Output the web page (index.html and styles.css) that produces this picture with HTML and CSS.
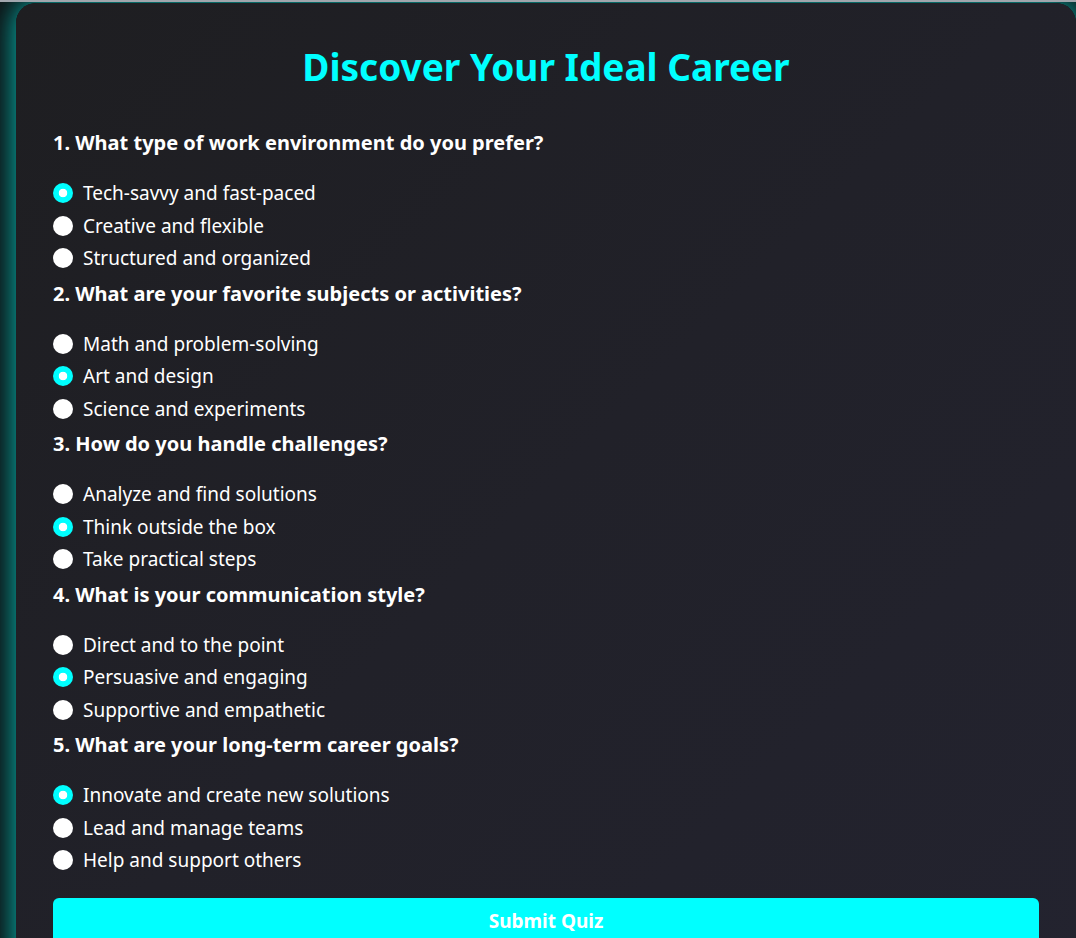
FILE: index.html
```html
<!DOCTYPE html>
<html lang="en">
<head>
<meta charset="utf-8">
<title>Discover Your Ideal Career</title>
<link rel="stylesheet" href="styles.css">
</head>
<body>
<div class="topline"></div>
<main class="card">
  <h1 class="title">Discover Your Ideal Career</h1>
  <form class="quiz">
    <section class="question">
      <h3 class="q-text">1. What type of work environment do you prefer?</h3>
      <label class="option"><input type="radio" name="q1" checked><span>Tech-savvy and fast-paced</span></label>
      <label class="option"><input type="radio" name="q1"><span>Creative and flexible</span></label>
      <label class="option"><input type="radio" name="q1"><span>Structured and organized</span></label>
    </section>
    <section class="question">
      <h3 class="q-text">2. What are your favorite subjects or activities?</h3>
      <label class="option"><input type="radio" name="q2"><span>Math and problem-solving</span></label>
      <label class="option"><input type="radio" name="q2" checked><span>Art and design</span></label>
      <label class="option"><input type="radio" name="q2"><span>Science and experiments</span></label>
    </section>
    <section class="question">
      <h3 class="q-text">3. How do you handle challenges?</h3>
      <label class="option"><input type="radio" name="q3"><span>Analyze and find solutions</span></label>
      <label class="option"><input type="radio" name="q3" checked><span>Think outside the box</span></label>
      <label class="option"><input type="radio" name="q3"><span>Take practical steps</span></label>
    </section>
    <section class="question">
      <h3 class="q-text">4. What is your communication style?</h3>
      <label class="option"><input type="radio" name="q4"><span>Direct and to the point</span></label>
      <label class="option"><input type="radio" name="q4" checked><span>Persuasive and engaging</span></label>
      <label class="option"><input type="radio" name="q4"><span>Supportive and empathetic</span></label>
    </section>
    <section class="question">
      <h3 class="q-text">5. What are your long-term career goals?</h3>
      <label class="option"><input type="radio" name="q5" checked><span>Innovate and create new solutions</span></label>
      <label class="option"><input type="radio" name="q5"><span>Lead and manage teams</span></label>
      <label class="option"><input type="radio" name="q5"><span>Help and support others</span></label>
    </section>
    <button type="button" class="submit">Submit Quiz</button>
  </form>
</main>
</body>
</html>
```

FILE: styles.css
```css
html, body {
  margin: 0;
  padding: 0;
}
body {
  background: #0e1214;
  font-family: "Noto Sans", "Open Sans", sans-serif;
  color: #ffffff;
  overflow: hidden;
  height: 938px;
}
.topline {
  height: 2px;
  background: #a1a6ad;
  position: relative;
  z-index: 2;
}
.card {
  margin: 1px 0 0 16px;
  width: 1060px;
  box-sizing: border-box;
  padding: 20px 37px 40px 37px;
  border-radius: 20px;
  background: linear-gradient(135deg, #1e1e21 0%, #212129 50%, #23232f 100%);
  box-shadow: 0 0 28px 2px rgba(0, 235, 225, 0.75);
}
.title {
  margin: 20px 0 38px;
  text-align: center;
  color: #00ffff;
  font-size: 37px;
  font-weight: 700;
  line-height: 48px;
}
.question {
  margin-top: 5px;
}
.question:first-child {
  margin-top: 0;
}
.q-text {
  margin: 0 0 21px;
  font-size: 20px;
  font-weight: 700;
  line-height: 27px;
}
.option {
  display: flex;
  align-items: center;
  gap: 10px;
  height: 32.5px;
  font-size: 19px;
}
.option input {
  appearance: none;
  -webkit-appearance: none;
  margin: 0;
  width: 20px;
  height: 20px;
  border-radius: 50%;
  background: #ffffff;
  flex: none;
}
.option input:checked {
  background: radial-gradient(circle, #ffffff 0 4px, #00ffff 4.6px);
}
.submit {
  display: block;
  width: 100%;
  margin-top: 21px;
  height: 46px;
  border: none;
  border-radius: 6px;
  background: #00ffff;
  color: #ffffff;
  font-family: inherit;
  font-size: 19px;
  font-weight: 700;
}
```
